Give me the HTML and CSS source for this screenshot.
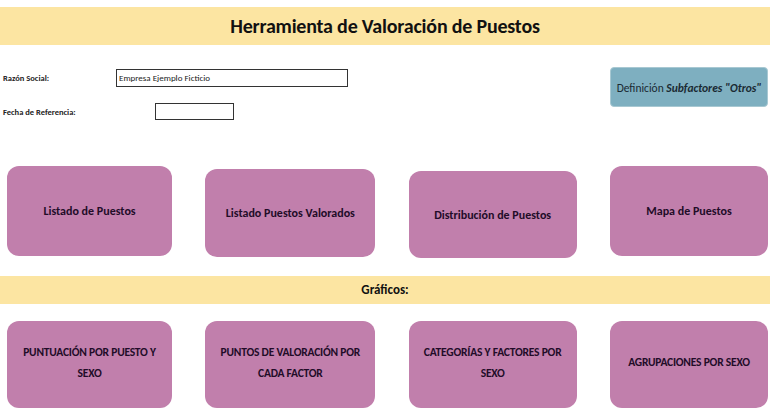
FILE: index.html
```html
<!DOCTYPE html>
<html lang="es">
<head>
    <meta charset="UTF-8">
    <title>Herramienta de Valoración de Puestos</title>
    <link rel="stylesheet" href="styles.css">
</head>
<body>
    <div class="title-bar">Herramienta de Valoración de Puestos</div>

    <div class="info">
        <div class="fields">
            <div class="field">
                <label class="field-label">Razón Social:</label>
                <div class="field-box field-box-wide">Empresa Ejemplo Ficticio</div>
            </div>
            <div class="field">
                <label class="field-label">Fecha de Referencia:</label>
                <div class="field-box field-box-date"></div>
            </div>
        </div>
        <div class="def-button">Definición <b><i>Subfactores "Otros"</i></b></div>
    </div>

    <div class="btn-row btn-row-top">
        <div class="nav-btn w1">Listado de Puestos</div>
        <div class="nav-btn w2 low">Listado Puestos Valorados</div>
        <div class="nav-btn w3 lower">Distribución de Puestos</div>
        <div class="nav-btn w4">Mapa de Puestos</div>
    </div>

    <div class="section-bar">Gráficos:</div>

    <div class="btn-row btn-row-bottom">
        <div class="nav-btn caps w1">PUNTUACIÓN POR PUESTO Y SEXO</div>
        <div class="nav-btn caps w2">PUNTOS DE VALORACIÓN POR CADA FACTOR</div>
        <div class="nav-btn caps w3">CATEGORÍAS Y FACTORES POR SEXO</div>
        <div class="nav-btn caps w4">AGRUPACIONES POR SEXO</div>
    </div>
</body>
</html>
```

FILE: styles.css
```css
body {
    font-family: Carlito, "Open Sans", sans-serif;
    background-color: #ffffff;
    color: #1c1420;
    margin: 0;
    padding: 0;
    width: 770px;
    height: 420px;
    overflow: hidden;
}
.title-bar {
    margin-top: 7px;
    height: 38px;
    line-height: 38px;
    background-color: #fce5a2;
    text-align: center;
    font-size: 20px;
    font-weight: bold;
    letter-spacing: -0.2px;
    color: #111111;
}
.info {
    display: flex;
    justify-content: space-between;
    padding: 24px 2px 0 3px;
}
.fields {
    display: flex;
    flex-direction: column;
    gap: 16px;
}
.field {
    display: flex;
    align-items: center;
}
.field-label {
    font-size: 8.5px;
    font-weight: bold;
    color: #222222;
}
.field-box {
    height: 16px;
    border: 1px solid #333333;
    font-size: 9px;
    line-height: 16px;
    padding-left: 2px;
    box-sizing: content-box;
    color: #222222;
}
.field-box-wide {
    width: 228px;
}
.field-box-date {
    width: 75px;
    height: 15px;
}
.field:first-child .field-label {
    width: 113px;
}
.field:last-child .field-label {
    width: 152px;
}
.def-button {
    width: 158px;
    height: 40px;
    line-height: 40px;
    margin-top: -2px;
    background-color: #7eafc0;
    border: 1px solid #a8c8d2;
    border-radius: 4px;
    text-align: center;
    font-size: 11.5px;
    color: #1a2a33;
    box-sizing: border-box;
}
.btn-row {
    display: flex;
    justify-content: space-between;
    align-items: flex-start;
    padding: 0 2px 0 7px;
}
.btn-row-top {
    margin-top: 46px;
}
.btn-row-bottom {
    margin-top: 17px;
}
.nav-btn {
    height: 90px;
    display: flex;
    align-items: center;
    justify-content: center;
    text-align: center;
    background-color: #c17fac;
    border-radius: 12px;
    font-size: 12px;
    font-weight: bold;
    color: #220c28;
    padding: 0 8px;
    box-sizing: border-box;
}
.nav-btn.low {
    margin-top: 3px;
    height: 88px;
}
.nav-btn.lower {
    margin-top: 5px;
    height: 87px;
}
.btn-row-bottom .nav-btn {
    height: 87px;
}
.caps {
    font-size: 11.5px;
    line-height: 21px;
    letter-spacing: -0.2px;
    padding: 0 6px 4px;
}
.w1 { width: 165px; }
.w2 { width: 170px; }
.w3 { width: 168px; }
.w4 { width: 158px; }
.section-bar {
    margin-top: 18px;
    height: 28px;
    line-height: 28px;
    background-color: #fce5a2;
    text-align: center;
    font-size: 13px;
    font-weight: bold;
    color: #111111;
}
```
